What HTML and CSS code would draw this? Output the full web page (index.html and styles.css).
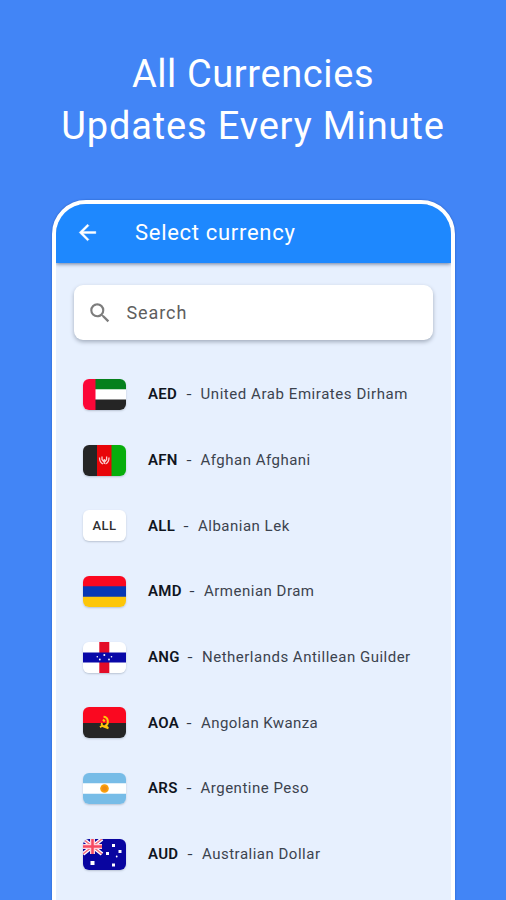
FILE: index.html
```html
<!DOCTYPE html>
<html lang="en">
<head>
<meta charset="utf-8">
<title>All Currencies</title>
<link rel="stylesheet" href="styles.css">
</head>
<body>
<main class="promo">
<h1 class="headline"><span class="line-one">All Currencies</span><br><span class="line-two">Updates Every Minute</span></h1>
<section class="phone">
<header class="appbar">
<svg class="back" viewBox="0 0 24 24"><path d="M20 11H7.8l5.6-5.6L12 4l-8 8 8 8 1.400-1.400L7.800 13H20z" fill="#fff" stroke="#fff" stroke-width=".4"/></svg>
<h2 class="title">Select currency</h2>
</header>
<div class="search">
<svg class="lens" viewBox="0 0 24 24"><path fill="#7d7d7d" d="M15.5 14h-.79l-.28-.27A6.47 6.47 0 0 0 16 9.5 6.5 6.5 0 1 0 9.5 16c1.61 0 3.09-.59 4.23-1.57l.27.28v.79l5 4.99L20.49 19l-4.99-5zm-6 0C7.01 14 5 11.99 5 9.5S7.01 5 9.5 5 14 7.01 14 9.5 11.99 14 9.5 14z"/></svg>
<span class="placeholder">Search</span>
</div>
<ul class="list">
<li class="row"><svg class="flag" viewBox="0 0 43 31"><path fill="#fff" d="M0 0h43v31H0z"/><path fill="#05801c" d="M12 0h31v10.300H12z"/><path fill="#252525" d="M12 20.500h31V31H12z"/><path fill="#fb0738" d="M0 0h12.500v31H0z"/></svg><b class="code">AED</b><span class="dash">-</span><span class="name aed">United Arab Emirates Dirham</span></li>
<li class="row"><svg class="flag" viewBox="0 0 43 31"><path fill="#252525" d="M0 0h15v31H0z"/><path fill="#e80509" d="M14 0h15v31H14z"/><path fill="#08ae0c" d="M28.500 0H43v31H28.500z"/><g fill="none" stroke="#fff" stroke-opacity=".8" stroke-width="1.300"><path d="M16.500 12.500q0 5 3.500 6.500M26 12.500q0 5-3.500 6.500M19 11.500v3l2.300 3 2.300-3v-3M21.300 14v5"/></g></svg><b class="code">AFN</b><span class="dash">-</span><span class="name">Afghan Afghani</span></li>
<li class="row"><span class="flag plain">ALL</span><b class="code all">ALL</b><span class="dash">-</span><span class="name">Albanian Lek</span></li>
<li class="row"><svg class="flag" viewBox="0 0 43 31"><path fill="#fc0820" d="M0 0h43v11H0z"/><path fill="#0838b5" d="M0 10.300h43v11H0z"/><path fill="#fdc60a" d="M0 20.700h43V31H0z"/></svg><b class="code amd">AMD</b><span class="dash">-</span><span class="name">Armenian Dram</span></li>
<li class="row"><svg class="flag" viewBox="0 0 43 31"><path fill="#fff" d="M0 0h43v31H0z"/><path fill="#e30c28" d="M16.300 0h10v31h-10z"/><path fill="#0908a8" d="M0 10.500h43v10H0z"/><g fill="#fff"><circle cx="14.300" cy="14.700" r=".8"/><circle cx="21.300" cy="13" r="1"/><circle cx="28.500" cy="14.700" r=".8"/><circle cx="16.800" cy="17.500" r=".9"/><circle cx="26" cy="17.500" r=".9"/></g></svg><b class="code wide">ANG</b><span class="dash">-</span><span class="name">Netherlands Antillean Guilder</span></li>
<li class="row"><svg class="flag" viewBox="0 0 43 31"><path fill="#fa0820" d="M0 0h43v17H0z"/><path fill="#252525" d="M0 16h43v15H0z"/><path fill="none" stroke="#fdc60a" stroke-width="2" d="M20.500 9.800c5 0 5.500 7 2.500 8.800s-5-.5-4-2.600M17 20.300l2-1.500 6.500 2.500M20 12.500l1.700 2M22 18l3 3"/></svg><b class="code aoa">AOA</b><span class="dash">-</span><span class="name aoa-name">Angolan Kwanza</span></li>
<li class="row"><svg class="flag" viewBox="0 0 43 31"><path fill="#77bce7" d="M0 0h43v31H0z"/><path fill="#fff" d="M0 10.300h43v10.400H0z"/><circle cx="21.500" cy="15.500" r="4.300" fill="#fba00b"/><circle cx="21.500" cy="15.500" r="2.500" fill="#f08d12"/></svg><b class="code">ARS</b><span class="dash">-</span><span class="name">Argentine Peso</span></li>
<li class="row"><svg class="flag" viewBox="0 0 43 31"><path fill="#0905a0" d="M0 0h43v31H0z"/><g><path d="M0 0l19 15M19 0L0 15" stroke="#fff" stroke-width="4"/><path d="M0 0l19 15M19 0L0 15" stroke="#f66f80" stroke-width="1.500"/><path d="M9.500 0v15M0 7.500h19" stroke="#ffd4dc" stroke-width="5"/><path d="M9.500 0v15M0 7.500h19" stroke="#f64961" stroke-width="2.500"/></g><g fill="#fff"><path d="M7.500 22h4v4h-4z"/><path d="M29 5h3v3h-3zM35.500 11h3v3h-3zM23 13h3v3h-3zM29 24.500h3v3h-3z"/><circle cx="33.700" cy="17.500" r=".9"/></g></svg><b class="code wide">AUD</b><span class="dash">-</span><span class="name">Australian Dollar</span></li>
</ul>
</section>
</main>
</body>
</html>
```
FILE: styles.css
```css
* { box-sizing: border-box; }
body { margin: 0; background: #4285f6; font-family: Roboto, "Liberation Sans", sans-serif; }
.promo { height: 900px; overflow: hidden; padding-top: 48px; display: flex; flex-direction: column; align-items: center; }
.headline { margin: 0 0 48px; font-size: 38px; font-weight: 400; line-height: 52px; text-align: center; color: #fff; white-space: nowrap; }
.line-one { letter-spacing: .6px; }
.line-two { letter-spacing: .83px; }
.phone { flex: none; width: 403px; height: 760px; border: 4px solid #fff; border-radius: 34px 34px 0 0; background: #e7f0fe; overflow: hidden; box-shadow: 0 0 2px #2457b5; margin-left: 1px; }
.appbar { height: 59px; display: flex; align-items: center; padding: 0 0 2px 19px; background: #1e88fe; box-shadow: 0 1px 4px #68799a; }
.back { width: 25px; height: 25px; }
.title { margin: 0 0 0 35px; font-size: 22px; line-height: 28px; font-weight: 400; letter-spacing: .7px; color: #fff; white-space: nowrap; }
.search { width: 359px; height: 55px; margin: 22px 0 21.5px 18px; padding-left: 13px; border-radius: 9px; background: #fff; box-shadow: 0 2px 4px #a3adbd; display: flex; align-items: center; }
.lens { width: 26px; height: 26px; }
.placeholder { margin-left: 13.5px; font-size: 18px; letter-spacing: .9px; color: #5e5e5e; }
.list { margin: 0; padding: 0 0 0 27px; list-style: none; }
.row { height: 65.7px; display: flex; align-items: center; white-space: nowrap; }
.flag { flex: none; width: 43px; height: 31px; border-radius: 6px; overflow: hidden; box-shadow: 0 1px 2px #b9c3d2; }
.plain { display: flex; align-items: center; justify-content: center; background: #fff; font-size: 13px; font-weight: 500; color: #303030; letter-spacing: .4px; }
.code { margin-left: 22px; width: 30.5px; font-size: 15px; font-weight: 600; letter-spacing: .3px; color: #10151e; }
.code.all { width: 28px; }
.code.amd { width: 34px; }
.code.wide { width: 32px; }
.code.aoa { width: 31px; }
.dash { margin-left: 8px; width: 6px; font-size: 15px; color: #303846; transform: scaleX(1.2); }
.name { margin-left: 8px; font-size: 15px; letter-spacing: .5px; color: #3c434e; }
.name.aed { letter-spacing: .56px; }
.name.aoa-name { letter-spacing: .43px; }
```
